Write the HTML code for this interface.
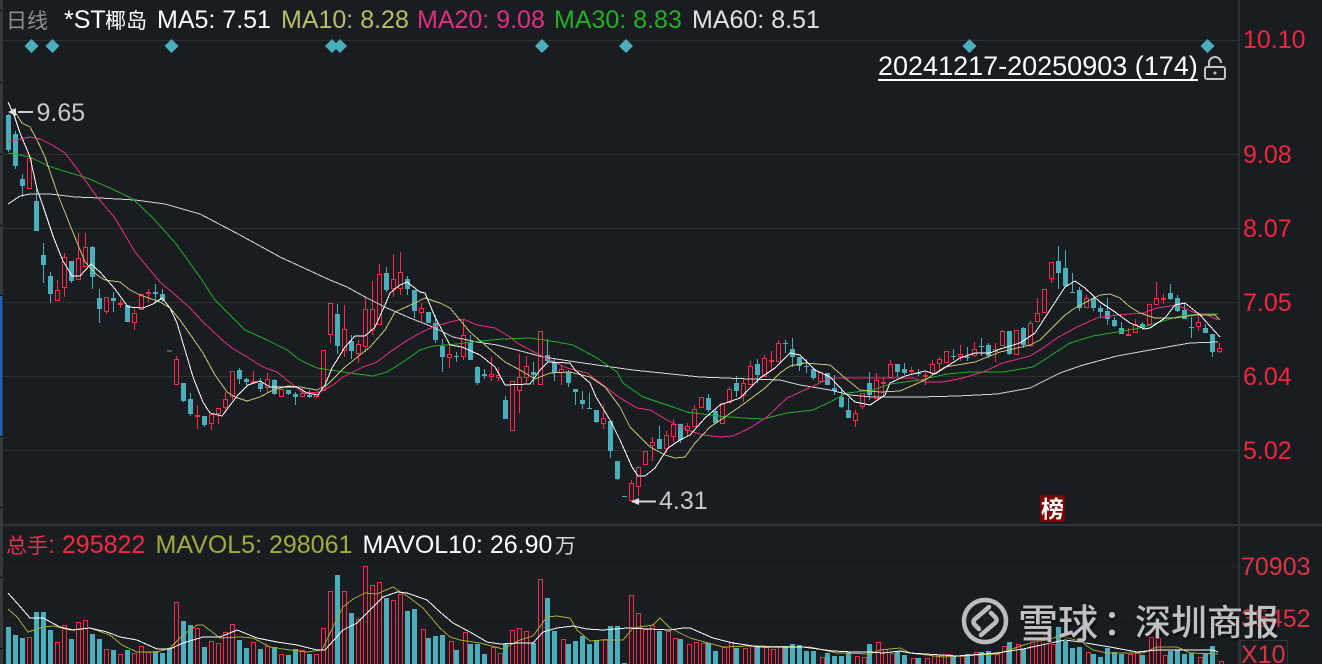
<!DOCTYPE html>
<html><head><meta charset="utf-8"><style>
html,body{margin:0;padding:0;background:#191c21;width:1322px;height:664px;overflow:hidden}
svg{position:absolute;left:0;top:0;display:block}
text{font-family:"Liberation Sans","Noto Sans CJK SC",sans-serif;font-size:25px}
.c{font-size:21px;font-family:"Liberation Sans","WenQuanYi Zen Hei","Noto Sans CJK SC",sans-serif}
.a{fill:#f4253f}.v{fill:#dc3540}
.wm{position:absolute;color:#bfc0c1;font-family:"Noto Sans CJK SC",sans-serif;font-weight:500;white-space:nowrap;text-shadow:1px 2px 3px rgba(0,0,0,.6);line-height:1}
</style></head><body>
<svg width="1322" height="664" viewBox="0 0 1322 664" xmlns="http://www.w3.org/2000/svg">
<g shape-rendering="crispEdges">
<rect width="1322" height="664" fill="#191c21"/>
<rect x="0" y="0" width="3" height="664" fill="#37383c"/>
<rect x="0" y="296" width="2" height="140" fill="#1f60c4"/>
<path d="M0 10.5h2M0 82.5h2M0 154.5h2M0 225.5h2M0 295.5h2M0 436.5h2M0 507.5h2M0 577.5h2M0 648.5h2" stroke="#000"/>
<path d="M4 40.5H1238M4 154.5H1238M4 228.5H1238M4 302.5H1238M4 376.5H1238M4 450.5H1238" stroke="#2f2f31" fill="none"/>
<rect x="3" y="524" width="1319" height="2" fill="#333438"/>
<rect x="1238" y="0" width="2" height="664" fill="#2f3034"/>
<path d="M4 566.5H1238M4 617.5H1238" stroke="#34353a" stroke-dasharray="1 3" fill="none"/>
<!-- wicks teal -->
<path fill="none" stroke="#4aafba" stroke-width="1" d="M8.5 114V152M15.5 131V169M22.5 174V197M36.5 189V231M43.5 243V283M50.5 272V303M71.5 261V283M92.5 246V289M99.5 289V323M113.5 292V312M127.5 305V322M155.5 284V302M162.5 289V302M183.5 383V402M190.5 393V416M204.5 416V427M239.5 368V384M246.5 378V388M260.5 378V392M274.5 379V395M288.5 390V395M295.5 392V405M309.5 390V398M337.5 304V354M351.5 335V359M386.5 267V292M407.5 276V295M414.5 290V318M428.5 312V323M435.5 315V343M442.5 339V372M456.5 352V362M470.5 335V360M477.5 366V385M484.5 369V379M505.5 396V419M533.5 362V385M547.5 339V362M554.5 358V381M568.5 370V387M575.5 389V405M582.5 391V409M589.5 393V409M596.5 410V423M610.5 421V458M617.5 461V480M659.5 426V449M680.5 424V443M708.5 394V412M715.5 409V423M736.5 376V397M757.5 359V383M785.5 340V353M792.5 338V367M799.5 357V371M806.5 359V373M813.5 369V380M827.5 373V385M834.5 375V395M841.5 388V408M848.5 398V418M869.5 372V400M897.5 364V377M904.5 363V375M918.5 369V376M953.5 349V360M967.5 347V361M981.5 338V356M988.5 343V358M1009.5 331V355M1023.5 327V348M1058.5 246V289M1065.5 250V287M1072.5 273V293M1079.5 287V311M1093.5 297V311M1100.5 305V318M1107.5 298V325M1114.5 317V327M1121.5 322V334M1142.5 322V330M1170.5 284V300M1177.5 295V312M1184.5 303V319M1191.5 317V338M1205.5 324V333M1212.5 334V357"/>
<!-- wicks red -->
<path fill="none" stroke="#ff2a45" stroke-width="1" d="M29.5 158V189M57.5 280V301M64.5 253V297M78.5 233V280M85.5 233V267M106.5 297V314M120.5 299V308M134.5 309V330M141.5 294V310M148.5 289V302M176.5 356V385M197.5 405V429M211.5 414V430M218.5 408V424M225.5 392V412M232.5 371V400M253.5 371V384M267.5 373V393M281.5 389V397M302.5 387V397M316.5 392V398M323.5 350V391M330.5 303V343M344.5 305V357M358.5 340V363M365.5 297V352M372.5 281V335M379.5 264V325M393.5 254V297M400.5 252V295M421.5 303V323M449.5 346V368M463.5 320V360M491.5 357V381M498.5 367V381M512.5 381V431M519.5 354V413M526.5 356V383M540.5 331V385M561.5 365V385M603.5 405V429M631.5 480V501M638.5 467V496M645.5 451V465M652.5 437V461M666.5 431V453M673.5 419V442M687.5 423V436M694.5 405V427M701.5 397V408M722.5 403V424M729.5 387V403M743.5 379V402M750.5 361V385M764.5 355V377M771.5 351V370M778.5 340V362M820.5 372V382M855.5 410V427M862.5 393V409M876.5 373V399M883.5 377V395M890.5 360V378M911.5 367V374M925.5 372V385M932.5 360V375M939.5 357V370M946.5 351V363M960.5 345V361M974.5 342V357M995.5 343V362M1002.5 330V346M1016.5 330V355M1030.5 321V347M1037.5 298V322M1044.5 289V313M1051.5 262V283M1086.5 295V308M1128.5 328V335M1135.5 319V333M1149.5 304V325M1156.5 282V305M1163.5 294V304M1198.5 316V331M1219.5 343V353"/>
<!-- teal bodies -->
<path fill="none" stroke="#4aafba" stroke-width="5" d="M8.5 115V150M15.5 134V166M22.5 179V186M36.5 201V231M43.5 255V265M50.5 276V294M71.5 261V281M92.5 247V277M99.5 298V309M113.5 298V301M127.5 305V322M155.5 292V294M162.5 294V300M169.5 350.500V351.500M183.5 383V401M190.5 399V414M204.5 416V425M239.5 370V379M246.5 379V382M260.5 383V389M274.5 380V394M288.5 390V394M295.5 394V397M309.5 395V397M337.5 314V346M351.5 341V351M386.5 273V290M407.5 279V289M414.5 290V311M428.5 312V323M435.5 323V340M442.5 346V357M456.5 356V357M470.5 342V360M477.5 367V383M484.5 374V376M505.5 400V419M533.5 372V375M547.5 355V361M554.5 362V373M568.5 372V383M575.5 389V392M582.5 400V404M589.5 408V409M596.5 410V422M610.5 421V451M617.5 461V479M624.5 496V497M659.5 439V449M680.5 424V440M708.5 398V410M715.5 411V423M736.5 383V391M757.5 364V375M785.5 343V344M792.5 349V357M799.5 357V366M806.5 366V367M813.5 369V378M827.5 373V385M834.5 388V391M841.5 397V407M848.5 410V418M869.5 383V395M897.5 364V372M904.5 369V373M918.5 373V374M953.5 356V357M967.5 357V358M981.5 346V347M988.5 345V356M1009.5 331V354M1023.5 328V345M1058.5 261V273M1065.5 268V286M1072.5 292V293M1079.5 290V308M1093.5 298V308M1100.5 308V312M1107.5 311V319M1114.5 320V326M1121.5 328V334M1142.5 324V328M1170.5 293V299M1177.5 298V311M1184.5 310V319M1191.5 327V328M1205.5 328V333M1212.5 334V352"/>
<!-- red bodies -->
<path fill="#191c21" stroke="#ff2a45" stroke-width="1" d="M27.500 158.500h4V188.500h-4zM55.500 290.500h4V300.500h-4zM62.500 257.500h4V287.500h-4zM76.500 258.500h4V279.500h-4zM83.500 247.500h4V266.500h-4zM104.500 297.500h4V311.500h-4zM118.500 303.500h4V304.500h-4zM132.500 313.500h4V322.500h-4zM139.500 294.500h4V309.500h-4zM146.500 292.500h4V293.500h-4zM174.500 359.500h4V384.500h-4zM195.500 415.500h4V416.500h-4zM209.500 414.500h4V423.500h-4zM216.500 408.500h4V413.500h-4zM223.500 399.500h4V407.500h-4zM230.500 371.500h4V396.500h-4zM251.500 381.500h4V382.500h-4zM265.500 379.500h4V387.500h-4zM279.500 389.500h4V396.500h-4zM300.500 393.500h4V396.500h-4zM314.500 392.500h4V396.500h-4zM321.500 350.500h4V390.500h-4zM328.500 303.500h4V334.500h-4zM342.500 329.500h4V350.500h-4zM356.500 344.500h4V353.500h-4zM363.500 309.500h4V346.500h-4zM370.500 309.500h4V330.500h-4zM377.500 274.500h4V324.500h-4zM391.500 279.500h4V288.500h-4zM398.500 272.500h4V288.500h-4zM419.500 308.500h4V312.500h-4zM447.500 354.500h4V357.500h-4zM461.500 335.500h4V356.500h-4zM489.500 374.500h4V376.500h-4zM496.500 375.500h4V377.500h-4zM510.500 381.500h4V430.500h-4zM517.500 377.500h4V390.500h-4zM524.500 366.500h4V377.500h-4zM538.500 331.500h4V384.500h-4zM559.500 369.500h4V372.500h-4zM601.500 418.500h4V423.500h-4zM629.500 483.500h4V500.500h-4zM636.500 467.500h4V486.500h-4zM643.500 451.500h4V464.500h-4zM650.500 442.500h4V445.500h-4zM664.500 435.500h4V448.500h-4zM671.500 424.500h4V436.500h-4zM685.500 426.500h4V430.500h-4zM692.500 409.500h4V426.500h-4zM699.500 397.500h4V407.500h-4zM720.500 403.500h4V423.500h-4zM727.500 389.500h4V402.500h-4zM741.500 383.500h4V395.500h-4zM748.500 366.500h4V384.500h-4zM762.500 358.500h4V376.500h-4zM769.500 360.500h4V361.500h-4zM776.500 343.500h4V361.500h-4zM818.500 372.500h4V381.500h-4zM853.500 413.500h4V420.500h-4zM860.500 393.500h4V406.500h-4zM874.500 380.500h4V398.500h-4zM881.500 382.500h4V383.500h-4zM888.500 364.500h4V377.500h-4zM909.500 370.500h4V371.500h-4zM923.500 375.500h4V376.500h-4zM930.500 364.500h4V373.500h-4zM937.500 359.500h4V363.500h-4zM944.500 351.500h4V362.500h-4zM958.500 354.500h4V356.500h-4zM972.500 349.500h4V355.500h-4zM993.500 349.500h4V351.500h-4zM1000.500 331.500h4V345.500h-4zM1014.500 330.500h4V354.500h-4zM1028.500 323.500h4V345.500h-4zM1035.500 313.500h4V321.500h-4zM1042.500 289.500h4V312.500h-4zM1049.500 262.500h4V278.500h-4zM1084.500 298.500h4V307.500h-4zM1126.500 334.500h4V335.500h-4zM1133.500 324.500h4V332.500h-4zM1147.500 304.500h4V324.500h-4zM1154.500 298.500h4V304.500h-4zM1161.500 298.500h4V299.500h-4zM1196.500 322.500h4V326.500h-4zM1217.500 348.500h4V351.500h-4z"/>
<!-- volume teal -->
<path fill="none" stroke="#4aafba" stroke-width="5" d="M8.500 627V665M15.500 635V665M22.500 638V665M36.500 612V665M43.500 612V665M50.500 630V665M71.500 639V665M92.500 634V665M99.500 639V665M113.500 650V665M127.500 650V665M155.500 651V665M162.500 653V665M169.500 648V665M183.500 621V665M190.500 625V665M204.500 647V665M239.500 640V665M246.500 648V665M260.500 649V665M274.500 647V665M288.500 655V665M295.500 649V665M309.500 654V665M337.500 575V665M351.500 613V665M386.500 598V665M407.500 611V665M414.500 609V665M428.500 638V665M435.500 636V665M442.500 635V665M456.500 650V665M470.500 644V665M477.500 644V665M484.500 654V665M505.500 644V665M533.500 643V665M547.500 598V665M554.500 631V665M568.500 644V665M575.500 641V665M582.500 636V665M589.500 644V665M596.500 640V665M610.500 626V665M617.500 626V665M624.500 663V665M659.500 631V665M680.500 639V665M708.500 643V665M715.500 651V665M736.500 648V665M757.500 647V665M785.500 647V665M792.500 644V665M799.500 645V665M806.500 651V665M813.500 651V665M827.500 653V665M834.500 656V665M841.500 656V665M848.500 652V665M869.500 644V665M897.500 651V665M904.500 655V665M918.500 658V665M953.500 656V665M967.500 654V665M981.500 652V665M988.500 651V665M1009.500 642V665M1023.500 649V665M1058.500 627V665M1065.500 641V665M1072.500 648V665M1079.500 647V665M1093.500 654V665M1100.500 657V665M1107.500 648V665M1114.500 652V665M1121.500 654V665M1142.500 655V665M1170.500 651V665M1177.500 650V665M1184.500 654V665M1191.500 653V665M1205.500 654V665M1212.500 646V665"/>
<!-- volume red -->
<path fill="#191c21" stroke="#ff2a45" stroke-width="1" d="M27.500 637.500h4V666h-4zM55.500 642.500h4V666h-4zM62.500 625.500h4V666h-4zM76.500 622.500h4V666h-4zM83.500 620.500h4V666h-4zM104.500 649.500h4V666h-4zM118.500 654.500h4V666h-4zM132.500 653.500h4V666h-4zM139.500 646.500h4V666h-4zM146.500 652.500h4V666h-4zM174.500 602.500h4V666h-4zM195.500 628.500h4V666h-4zM209.500 641.500h4V666h-4zM216.500 643.500h4V666h-4zM223.500 632.500h4V666h-4zM230.500 624.500h4V666h-4zM251.500 642.500h4V666h-4zM265.500 646.500h4V666h-4zM279.500 654.500h4V666h-4zM300.500 650.500h4V666h-4zM314.500 654.500h4V666h-4zM321.500 628.500h4V666h-4zM328.500 591.500h4V666h-4zM342.500 591.500h4V666h-4zM356.500 619.500h4V666h-4zM363.500 566.500h4V666h-4zM370.500 585.500h4V666h-4zM377.500 582.500h4V666h-4zM391.500 600.500h4V666h-4zM398.500 594.500h4V666h-4zM421.500 629.500h4V666h-4zM449.500 641.500h4V666h-4zM463.500 632.500h4V666h-4zM491.500 647.500h4V666h-4zM498.500 653.500h4V666h-4zM510.500 630.500h4V666h-4zM517.500 628.500h4V666h-4zM524.500 631.500h4V666h-4zM538.500 579.500h4V666h-4zM561.500 639.500h4V666h-4zM603.500 639.500h4V666h-4zM629.500 595.500h4V666h-4zM636.500 613.500h4V666h-4zM643.500 629.500h4V666h-4zM650.500 625.500h4V666h-4zM666.500 631.500h4V666h-4zM673.500 638.500h4V666h-4zM687.500 644.500h4V666h-4zM694.500 642.500h4V666h-4zM701.500 643.500h4V666h-4zM722.500 647.500h4V666h-4zM729.500 642.500h4V666h-4zM743.500 648.500h4V666h-4zM750.500 646.500h4V666h-4zM764.500 647.500h4V666h-4zM771.500 649.500h4V666h-4zM778.500 646.500h4V666h-4zM820.500 657.500h4V666h-4zM855.500 656.500h4V666h-4zM862.500 657.500h4V666h-4zM876.500 642.500h4V666h-4zM883.500 649.500h4V666h-4zM890.500 653.500h4V666h-4zM911.500 658.500h4V666h-4zM925.500 658.500h4V666h-4zM932.500 654.500h4V666h-4zM939.500 655.500h4V666h-4zM946.500 654.500h4V666h-4zM960.500 656.500h4V666h-4zM974.500 652.500h4V666h-4zM995.500 654.500h4V666h-4zM1002.500 646.500h4V666h-4zM1016.500 644.500h4V666h-4zM1030.500 641.500h4V666h-4zM1037.500 638.500h4V666h-4zM1044.500 634.500h4V666h-4zM1051.500 644.500h4V666h-4zM1086.500 652.500h4V666h-4zM1128.500 654.500h4V666h-4zM1135.500 652.500h4V666h-4zM1149.500 637.500h4V666h-4zM1156.500 638.500h4V666h-4zM1163.500 655.500h4V666h-4zM1198.500 657.500h4V666h-4zM1219.500 661.500h4V666h-4z"/>
<!-- MA lines -->
<polyline fill="none" stroke="#d8d8d8" stroke-width="1" points="8,204 20,196 30,194 50,194 75,197 100,198 135,200 165,204 200,214 240,235 280,257 330,280 347,287 367,298 387,308 410,318 433,327 453,337 477,342 497,345 517,350 543,357 583,363 633,370 700,377 750,379 780,380 800,385 830,390 850,395 873,397 920,397 957,396 997,394 1030,388 1060,373 1083,365 1117,356 1150,350 1190,343 1218,342"/>
<polyline fill="none" stroke="#1fb01f" stroke-width="1" points="8,153 20,155 30,157 48,166 67,172 87,178 110,188 133,199 153,218 177,245 197,273 202,280 215,300 230,315 245,330 267,340 287,350 300,360 317,368 330,370 350,373 373,376 387,372 403,362 420,350 433,346 457,344 480,341 503,339 530,338 557,342 573,345 597,358 617,372 623,383 643,397 673,407 687,412 717,416 743,418 763,419 787,413 813,410 830,402 847,393 873,390 890,384 920,380 947,374 970,372 1003,372 1033,367 1047,358 1070,343 1093,336 1117,332 1140,328 1160,322 1180,316 1200,314 1218,314"/>
<polyline fill="none" stroke="#e9307c" stroke-width="1" points="8,142 20,139 30,137 40,139 52,145 65,153 75,166 85,180 97,197 115,218 125,235 135,252 150,270 160,282 173,293 190,308 203,322 220,338 232,348 247,357 263,367 277,372 293,385 303,393 320,392 333,385 343,377 363,367 377,362 390,352 403,343 420,333 433,327 450,322 463,319 477,325 495,328 510,337 517,343 540,355 567,368 587,373 603,385 620,398 637,408 650,410 667,420 687,430 703,435 720,437 733,436 750,428 767,417 787,398 807,389 830,378 913,378 927,382 943,382 963,378 983,372 1003,363 1030,356 1043,348 1057,338 1077,327 1097,318 1117,315 1143,313 1157,308 1177,305 1193,312 1207,315 1218,320"/>
<polyline fill="none" stroke="#c6c96f" stroke-width="1" points="10,108 15,112 22,123 30,127 37,140 45,157 48,166 58,195 72,230 85,262 97,275 105,280 120,282 130,290 140,295 160,302 170,308 180,320 192,337 203,353 215,375 227,392 235,397 247,401 260,397 273,390 288,386 300,387 317,390 327,385 345,367 370,347 385,330 395,312 415,303 425,298 440,303 450,308 470,332 485,345 505,362 520,370 535,379 550,373 570,372 590,377 605,387 620,407 630,427 640,437 650,447 665,455 675,458 685,457 695,443 710,427 725,417 745,403 765,388 780,373 790,366 805,363 830,365 845,378 860,390 880,392 900,391 925,380 945,367 975,362 1000,352 1030,345 1040,340 1050,330 1065,315 1075,308 1090,300 1100,295 1110,294 1120,298 1130,307 1140,313 1155,318 1175,318 1195,315 1215,315 1220,320"/>
<polyline fill="none" stroke="#ffffff" stroke-width="1" points="8,102 14,115 20,133 30,157 37,189 43,206 53,236 63,261 72,276 80,276 91,264 100,272 115,289 128,307 143,308 153,304 162,298 170,308 177,323 185,350 193,377 203,402 210,413 222,416 228,408 237,396 248,385 260,381 270,387 278,387 297,387 307,393 318,395 325,385 332,368 345,347 355,336 365,336 375,327 385,305 390,293 400,285 407,282 420,292 425,293 435,317 450,345 462,347 480,355 495,367 505,385 530,384 540,370 548,362 570,363 575,370 590,383 596,397 610,420 620,440 632,467 638,476 645,476 655,468 668,448 680,440 690,435 705,418 720,405 740,398 760,378 775,368 790,353 800,355 815,370 830,377 845,393 855,402 870,405 885,395 890,383 905,376 925,371 935,374 960,358 975,353 990,353 1000,349 1020,343 1035,333 1050,310 1065,287 1075,281 1085,288 1100,302 1115,312 1130,323 1145,329 1150,328 1165,318 1175,305 1185,303 1200,315 1220,337"/>
<!-- volume lines -->
<polyline fill="none" stroke="#a5ad2d" stroke-width="1" points="8,609 17,617 28,632 43,627 53,626 70,630 90,628 110,635 122,645 137,652 157,652 170,648 183,635 197,625 203,625 220,638 240,637 253,638 270,647 290,650 307,652 322,650 333,627 343,607 353,599 365,593 377,594 393,587 410,598 423,608 440,628 450,637 460,640 480,643 503,649 520,640 533,636 547,617 557,616 570,618 577,630 590,641 603,640 623,640 633,628 653,625 660,618 670,628 690,638 723,647 750,646 810,647 837,653 870,654 880,650 900,648 910,653 943,657 997,654 1030,643 1050,639 1060,636 1080,641 1093,650 1107,653 1127,653 1143,653 1157,647 1177,647 1190,653 1218,654"/>
<polyline fill="none" stroke="#ffffff" stroke-width="1" points="8,593 17,603 30,618 43,618 60,627 73,630 90,628 107,632 120,637 137,640 157,649 170,649 183,643 203,637 220,637 237,630 257,638 277,642 297,645 317,650 325,650 343,630 357,623 370,610 383,597 397,592 407,593 427,600 440,612 453,623 470,632 487,642 500,644 520,643 533,643 543,632 557,628 573,626 587,629 603,630 627,628 670,630 683,628 690,628 713,638 733,643 760,647 803,647 833,651 853,652 870,652 883,653 900,651 910,653 957,656 997,653 1023,649 1060,641 1065,640 1080,642 1110,647 1137,652 1157,650 1213,650 1218,652"/>
<!-- markers -->
<path d="M18 112H33" stroke="#cfcfcf" stroke-width="2" fill="none"/>
<path d="M632 501.500H656" stroke="#d4d4d4" stroke-width="2" fill="none"/>
</g>
<path d="M8 112l8-4v8zM631 501.500l8-3.500v7z" fill="#e0e0e0"/>
<path fill="#4aafba" d="M31.500 39l7 7-7 7-7-7zM52.500 39l7 7-7 7-7-7zM171.500 39l7 7-7 7-7-7zM332 39l7 7-7 7-7-7zM340 39l7 7-7 7-7-7zM542 39l7 7-7 7-7-7zM626 39l7 7-7 7-7-7zM969.500 39l7 7-7 7-7-7zM1207.500 39l7 7-7 7-7-7z"/>
<!-- header text -->
<text class="c" x="6" y="28" fill="#8d8f93">日线</text>
<text x="64" y="28" fill="#fff">*ST</text>
<text class="c" x="105" y="28" fill="#fff">椰岛</text>
<text x="157" y="28" fill="#fff">MA5: 7.51</text>
<text x="281" y="28" fill="#b8bd66">MA10: 8.28</text>
<text x="417" y="28" fill="#e0307c">MA20: 9.08</text>
<text x="554" y="28" fill="#23b123">MA30: 8.83</text>
<text x="692" y="28" fill="#e2e2e2">MA60: 8.51</text>
<text x="36.500" y="121" fill="#c8c9ca">9.65</text>
<text x="659" y="509" fill="#c8c9ca">4.31</text>
<text x="878" y="75" fill="#fff" style="font-size:27px">20241217-20250903 (174)</text>
<rect x="878" y="79" width="320" height="2" fill="#fff"/>
<g fill="none" stroke="#c4c5c6" stroke-width="2"><rect x="1205" y="67" width="20" height="12" rx="2"/><path d="M1209 67v-4a6 6 0 0 1 12 0v0"/></g>
<circle cx="1215" cy="73" r="1.500" fill="#c4c5c6"/>
<text class="a" x="1243" y="48">10.10</text>
<text class="a" x="1243" y="163">9.08</text>
<text class="a" x="1243" y="237">8.07</text>
<text class="a" x="1243" y="311">7.05</text>
<text class="a" x="1243" y="385">6.04</text>
<text class="a" x="1243" y="459">5.02</text>
<text class="v" x="1241" y="575">70903</text>
<text class="v" x="1241" y="627">35452</text>
<rect x="1240.500" y="640.500" width="47" height="30" fill="none" stroke="#333438" shape-rendering="crispEdges"/>
<text class="v" x="1241" y="663">X10</text>
<rect x="1040" y="495" width="25" height="27" fill="#7d0000"/>
<text x="1041" y="517" fill="#fff" style="font-family:'WenQuanYi Zen Hei','Noto Sans CJK SC',sans-serif;font-size:23px;font-weight:bold">榜</text>
<!-- volume header -->
<text class="c" x="6" y="553" fill="#e8314a">总手</text>
<text x="48" y="553" fill="#f42a45">: 295822</text>
<text x="155.500" y="553" fill="#9fae3c">MAVOL5: 298061</text>
<text x="362.500" y="553" fill="#fff">MAVOL10: 26.90</text>
<text class="c" x="555" y="553" fill="#d8d8d8">万</text>
<!-- watermark logo -->
<g fill="none" stroke="#bbbcbd" stroke-width="4.500" stroke-linecap="round">
<circle cx="985" cy="621" r="21"/>
<path d="M989 607L975 619Q972 622 975 625L979 629"/>
<path d="M981 635L995 623Q998 620 995 617L991 613"/>
</g>
</svg>
<div class="wm" style="left:1018px;top:601px;font-size:40px">雪球</div>
<div class="wm" style="left:1103px;top:602px;font-size:36px">：</div>
<div class="wm" style="left:1135px;top:602px;font-size:36px">深圳商报</div>
</body></html>
